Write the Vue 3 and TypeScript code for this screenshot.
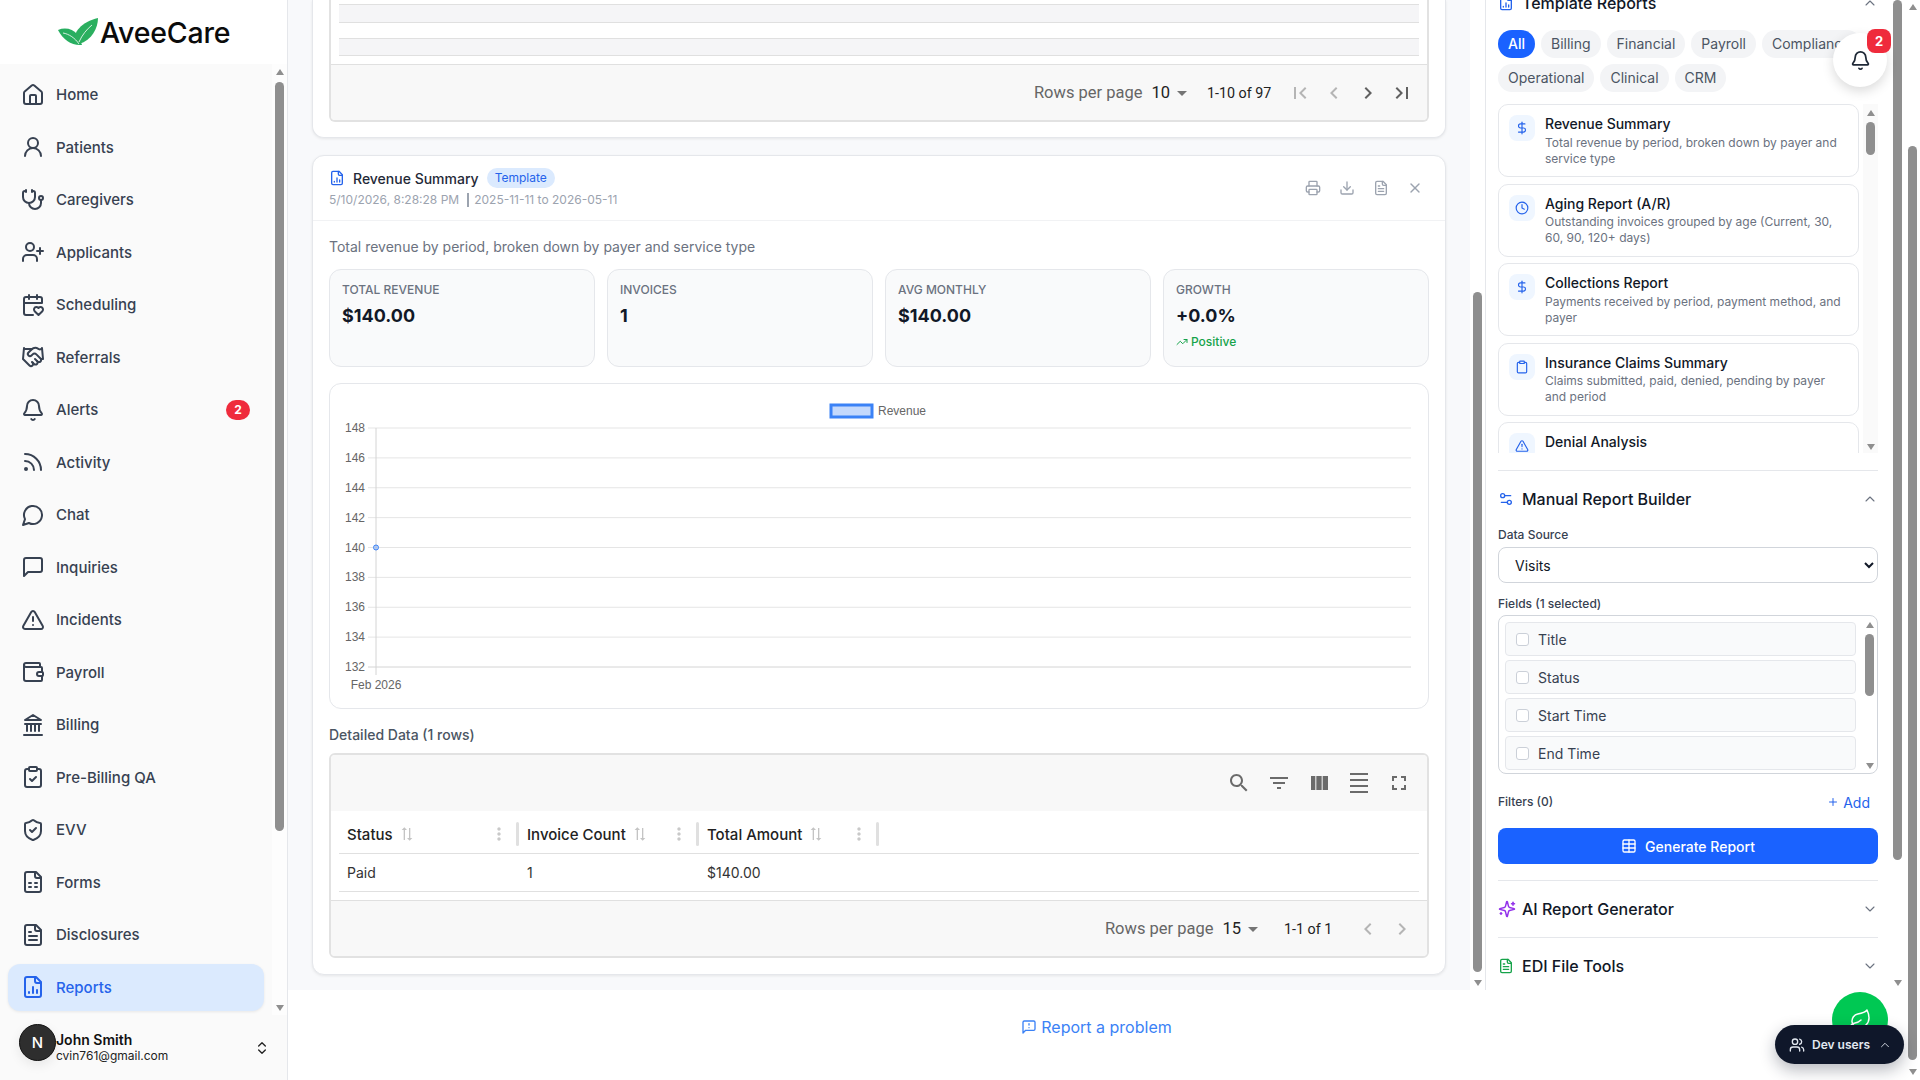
<script setup lang="ts">
const p = (...d: string[]) => d.map((x) => `<path d="${x}"/>`).join("");
const fileBase = "M15 2H6a2 2 0 0 0-2 2v16a2 2 0 0 0 2 2h12a2 2 0 0 0 2-2V7Z";
const fileFold = "M14 2v4a2 2 0 0 0 2 2h4";
const clip =
  '<rect x="8" y="2" width="8" height="4" rx="1"/>' +
  p("M16 4h2a2 2 0 0 1 2 2v14a2 2 0 0 1-2 2H6a2 2 0 0 1-2-2V6a2 2 0 0 1 2-2h2");

const ic: Record<string, string> = {
  home: p("M15 21v-8a1 1 0 0 0-1-1h-4a1 1 0 0 0-1 1v8", "M3 10a2 2 0 0 1 .709-1.528l7-5.999a2 2 0 0 1 2.582 0l7 5.999A2 2 0 0 1 21 10v9a2 2 0 0 1-2 2H5a2 2 0 0 1-2-2z"),
  user: '<circle cx="12" cy="8" r="5"/>' + p("M20 21a8 8 0 0 0-16 0"),
  steth: p("M11 2v2", "M5 2v2", "M5 3H4a2 2 0 0 0-2 2v4a6 6 0 0 0 12 0V5a2 2 0 0 0-2-2h-1", "M8 15a6 6 0 0 0 12 0v-3") + '<circle cx="20" cy="10" r="2"/>',
  userPlus: p("M16 21v-2a4 4 0 0 0-4-4H6a4 4 0 0 0-4 4v2", "M19 8v6", "M22 11h-6") + '<circle cx="9" cy="7" r="4"/>',
  calHeart: p("M3 10h18V6a2 2 0 0 0-2-2H5a2 2 0 0 0-2 2v14c0 1.1.9 2 2 2h7", "M8 2v4", "M16 2v4", "M21.29 14.7a2.43 2.43 0 0 0-2.65-.52c-.3.12-.57.3-.8.53l-.34.34-.35-.34a2.43 2.43 0 0 0-2.65-.53c-.3.12-.56.3-.79.53-.95.94-1 2.53.2 3.74L17.5 22l3.6-3.55c1.2-1.21 1.14-2.8.19-3.74Z"),
  handshake: p("m11 17 2 2a1 1 0 1 0 3-3", "m14 14 2.5 2.5a1 1 0 1 0 3-3l-3.88-3.88a3 3 0 0 0-4.24 0l-.88.88a1 1 0 1 1-3-3l2.81-2.81a5.79 5.79 0 0 1 7.06-.87l.47.28a2 2 0 0 0 1.42.25L21 4", "m21 3 1 11h-2", "M3 3 2 14l6.5 6.5a1 1 0 1 0 3-3", "M3 4h8"),
  bell: p("M10.268 21a2 2 0 0 0 3.464 0", "M3.262 15.326A1 1 0 0 0 4 17h16a1 1 0 0 0 .74-1.673C19.41 13.956 18 12.499 18 8A6 6 0 0 0 6 8c0 4.499-1.411 5.956-2.738 7.326"),
  rss: p("M4 11a9 9 0 0 1 9 9", "M4 4a16 16 0 0 1 16 16") + '<circle cx="5" cy="19" r="1"/>',
  chat: p("M7.9 20A9 9 0 1 0 4 16.1L2 22Z"),
  square: p("M21 15a2 2 0 0 1-2 2H7l-4 4V5a2 2 0 0 1 2-2h14a2 2 0 0 1 2 2z"),
  alert: p("m21.73 18-8-14a2 2 0 0 0-3.48 0l-8 14A2 2 0 0 0 4 21h16a2 2 0 0 0 1.73-3", "M12 9v4", "M12 17h.01"),
  wallet: p("M19 7V4a1 1 0 0 0-1-1H5a2 2 0 0 0 0 4h15a1 1 0 0 1 1 1v4h-3a2 2 0 0 0 0 4h3a1 1 0 0 0 1-1v-2a1 1 0 0 0-1-1", "M3 5v14a2 2 0 0 0 2 2h15a1 1 0 0 0 1-1v-4"),
  bank: p("M3 22h18", "M6 18v-7", "M10 18v-7", "M14 18v-7", "M18 18v-7", "M12 2l8 5H4z", "M4 11h16"),
  clipCheck: clip + p("m9 14 2 2 4-4"),
  shield: p("M20 13c0 5-3.5 7.5-7.66 8.95a1 1 0 0 1-.67-.01C7.5 20.5 4 18 4 13V6a1 1 0 0 1 1-1c2 0 4.5-1.2 6.24-2.72a1.17 1.17 0 0 1 1.52 0C14.51 3.81 17 5 19 5a1 1 0 0 1 1 1z", "m9 12 2 2 4-4"),
  forms: p(fileBase, fileFold, "M8 13h2", "M14 13h2", "M8 17h2", "M14 17h2"),
  fileText: p(fileBase, fileFold, "M10 9H8", "M16 13H8", "M16 17H8"),
  fileChart: p(fileBase, fileFold, "M8 18v-1", "M12 18v-6", "M16 18v-3"),
  dollar: p("M12 2v20", "M17 5H9.5a3.5 3.5 0 0 0 0 7h5a3.5 3.5 0 0 1 0 7H6"),
  clock: '<circle cx="12" cy="12" r="10"/>' + p("M12 6v6l4 2"),
  clip,
  sliders: p("M14 17H5", "M19 7h-9") + '<circle cx="17" cy="17" r="3"/><circle cx="7" cy="7" r="3"/>',
  sparkles: p("M9.937 15.5A2 2 0 0 0 8.5 14.063l-6.135-1.582a.5.5 0 0 1 0-.962L8.5 9.936A2 2 0 0 0 9.937 8.5l1.582-6.135a.5.5 0 0 1 .963 0L14.063 8.5A2 2 0 0 0 15.5 9.937l6.135 1.581a.5.5 0 0 1 0 .964L15.5 14.063a2 2 0 0 0-1.437 1.437l-1.582 6.135a.5.5 0 0 1-.963 0z", "M20 3v4", "M22 5h-4", "M4 17v2", "M5 18H3"),
  table: '<rect x="3" y="3" width="18" height="18" rx="2"/>' + p("M12 3v18", "M3 9h18", "M3 15h18"),
  printer: p("M6 18H4a2 2 0 0 1-2-2v-5a2 2 0 0 1 2-2h16a2 2 0 0 1 2 2v5a2 2 0 0 1-2 2h-2", "M6 9V3a1 1 0 0 1 1-1h10a1 1 0 0 1 1 1v6") + '<rect x="6" y="14" width="12" height="8" rx="1"/>',
  download: p("M12 15V3", "M21 15v4a2 2 0 0 1-2 2H5a2 2 0 0 1-2-2v-4", "m7 10 5 5 5-5"),
  close: p("M18 6 6 18", "m6 6 12 12"),
  updown: p("m7 15 5 5 5-5", "m7 9 5-5 5 5"),
  up: p("m18 15-6-6-6 6"),
  down: p("m6 9 6 6 6-6"),
  report: p("M21 15a2 2 0 0 1-2 2H7l-4 4V5a2 2 0 0 1 2-2h14a2 2 0 0 1 2 2z", "M12 7v2", "M12 13h.01"),
  plus: p("M5 12h14", "M12 5v14"),
  trend: p("M16 7h6v6", "m22 7-8.5 8.5-5-5L2 17"),
  leaf: p("M11 20A7 7 0 0 1 9.8 6.1C15.5 5 17 4.48 19 2c1 2 2 4.18 2 8 0 5.5-4.78 10-10 10Z", "M2 21c0-3 1.85-5.36 5.08-6C9.5 14.52 12 13 13 12"),
  users: p("M16 21v-2a4 4 0 0 0-4-4H6a4 4 0 0 0-4 4v2", "M22 21v-2a4 4 0 0 0-3-3.87", "M16 3.13a4 4 0 0 1 0 7.75") + '<circle cx="9" cy="7" r="4"/>',
};

// material icons used by the data table
const mi: Record<string, string> = {
  search: p("M15.5 14h-.79l-.28-.27C15.41 12.59 16 11.11 16 9.5 16 5.91 13.09 3 9.5 3S3 5.91 3 9.5 5.91 16 9.5 16c1.61 0 3.09-.59 4.23-1.57l.27.28v.79l5 4.99L20.49 19l-4.99-5zm-6 0C7.01 14 5 11.99 5 9.5S7.01 5 9.5 5 14 7.01 14 9.5 11.99 14 9.5 14z"),
  filter: p("M10 18h4v-2h-4v2zM3 6v2h18V6H3zm3 7h12v-2H6v2z"),
  columns: p("M14.67 5v14H9.33V5h5.34zm1 14H21V5h-5.33v14zm-7.34 0V5H4v14h4.33z"),
  density: p("M3 2h18v2H3zm0 18h18v2H3zm0-6h18v2H3zm0-6h18v2H3z"),
  full: p("M7 14H5v5h5v-2H7v-3zm-2-4h2V7h3V5H5v5zm12 7h-3v2h5v-5h-2v3zM14 5v2h3v3h2V5h-5z"),
  first: p("M18.41 16.59 13.82 12l4.59-4.59L17 6l-6 6 6 6zM6 6h2v12H6z"),
  last: p("M5.59 7.41 10.18 12l-4.59 4.59L7 18l6-6-6-6zM16 6h2v12h-2z"),
  prev: p("M15.41 7.41 14 6l-6 6 6 6 1.41-1.41L10.83 12z"),
  next: p("M10 6 8.59 7.41 13.17 12l-4.58 4.59L10 18l6-6z"),
  more: p("M12 8c1.1 0 2-.9 2-2s-.9-2-2-2-2 .9-2 2 .9 2 2 2zm0 2c-1.1 0-2 .9-2 2s.9 2 2 2 2-.9 2-2-.9-2-2-2zm0 6c-1.1 0-2 .9-2 2s.9 2 2 2 2-.9 2-2-.9-2-2-2z"),
  sort: p("m18 12 4-4-4-4v3H3v2h15zM6 12l-4 4 4 4v-3h15v-2H6z"),
  caret: p("m7 10 5 5 5-5z"),
};

const navItems = [
  { label: "Home", icon: "home" },
  { label: "Patients", icon: "user" },
  { label: "Caregivers", icon: "steth" },
  { label: "Applicants", icon: "userPlus" },
  { label: "Scheduling", icon: "calHeart" },
  { label: "Referrals", icon: "handshake" },
  { label: "Alerts", icon: "bell", badge: 2 },
  { label: "Activity", icon: "rss" },
  { label: "Chat", icon: "chat" },
  { label: "Inquiries", icon: "square" },
  { label: "Incidents", icon: "alert" },
  { label: "Payroll", icon: "wallet" },
  { label: "Billing", icon: "bank" },
  { label: "Pre-Billing QA", icon: "clipCheck" },
  { label: "EVV", icon: "shield" },
  { label: "Forms", icon: "forms" },
  { label: "Disclosures", icon: "fileText" },
  { label: "Reports", icon: "fileChart", active: true },
];

const kpis = [
  { label: "Total Revenue", value: "$140.00" },
  { label: "Invoices", value: "1" },
  { label: "Avg Monthly", value: "$140.00" },
  { label: "Growth", value: "+0.0%", positive: true },
];

const yTicks = [148, 146, 144, 142, 140, 138, 136, 134, 132];
const tickY = (i: number) => 44 + i * 29.875;

const columns = ["Status", "Invoice Count", "Total Amount"];
const cells = ["Paid", "1", "$140.00"];

const chips = ["All", "Billing", "Financial", "Payroll", "Compliance", "Operational", "Clinical", "CRM"];

const templates = [
  { title: "Revenue Summary", desc: "Total revenue by period, broken down by payer and service type", icon: "dollar" },
  { title: "Aging Report (A/R)", desc: "Outstanding invoices grouped by age (Current, 30, 60, 90, 120+ days)", icon: "clock" },
  { title: "Collections Report", desc: "Payments received by period, payment method, and payer", icon: "dollar" },
  { title: "Insurance Claims Summary", desc: "Claims submitted, paid, denied, pending by payer and period", icon: "clip" },
  { title: "Denial Analysis", desc: "", icon: "alert" },
];

const fields = ["Title", "Status", "Start Time", "End Time"];
</script>

<template>
  <div class="app">
    <aside class="sidebar">
      <div class="logo">
        <svg class="logo-mark" viewBox="0 0 42 28">
          <path d="M1 12c7-3 15-1 19 4 2 3 4 8 5 11C15 28 6 22 1 12z" fill="#27ae60" />
          <path d="M18 25C15 14 25 4 41 0c0 10-6 22-19 26z" fill="#2baf5f" />
          <path d="M6 15c6 1 12 5 16 11M22 24c3-7 8-13 13-17" fill="none" stroke="#fff" stroke-width=".8" />
        </svg>
        <span class="logo-text">AveeCare</span>
      </div>
      <div class="nav-wrap">
        <nav class="nav">
          <a v-for="item in navItems" :key="item.label" class="nav-item" :class="{ active: item.active }">
            <svg class="ic nav-ic" viewBox="0 0 24 24" v-html="ic[item.icon]" />
            <span>{{ item.label }}</span>
            <b v-if="item.badge" class="nav-badge">{{ item.badge }}</b>
          </a>
        </nav>
        <div class="rail rail-nav"><i class="arrow up" /><i class="thumb" /><i class="arrow dn" /></div>
      </div>
      <div class="user">
        <div class="avatar">N</div>
        <div class="user-text">
          <div class="user-name">John Smith</div>
          <div class="user-mail">cvin761@gmail.com</div>
        </div>
        <svg class="ic user-toggle" viewBox="0 0 24 24" v-html="ic.updown" />
      </div>
    </aside>

    <div class="page">
      <div class="page-body">
        <main class="main">
          <div class="main-scroll">
            <section class="card card-cut">
              <div class="dt dt-cut">
                <div class="dt-rows">
                  <div class="cut-row stripe short" />
                  <div class="cut-row" />
                  <div class="cut-row stripe" />
                </div>
                <div class="dt-foot">
                  <span class="rpp">Rows per page</span>
                  <span class="rpp-val">10</span>
                  <svg class="mi caret" viewBox="0 0 24 24" v-html="mi.caret" />
                  <span class="range">1-10 of 97</span>
                  <svg class="mi pg dim" viewBox="0 0 24 24" v-html="mi.first" />
                  <svg class="mi pg dim" viewBox="0 0 24 24" v-html="mi.prev" />
                  <svg class="mi pg" viewBox="0 0 24 24" v-html="mi.next" />
                  <svg class="mi pg" viewBox="0 0 24 24" v-html="mi.last" />
                </div>
              </div>
            </section>

            <section class="card card-report">
              <header class="report-head">
                <div>
                  <div class="report-title">
                    <svg class="ic title-ic" viewBox="0 0 24 24" v-html="ic.fileChart" />
                    <span>Revenue Summary</span>
                    <span class="tag">Template</span>
                  </div>
                  <div class="report-meta">
                    <span>5/10/2026, 8:28:28 PM</span>
                    <i class="meta-sep" />
                    <span>2025-11-11 to 2026-05-11</span>
                  </div>
                </div>
                <div class="report-actions">
                  <svg class="ic" viewBox="0 0 24 24" v-html="ic.printer" />
                  <svg class="ic" viewBox="0 0 24 24" v-html="ic.download" />
                  <svg class="ic" viewBox="0 0 24 24" v-html="ic.fileText" />
                  <svg class="ic" viewBox="0 0 24 24" v-html="ic.close" />
                </div>
              </header>

              <div class="report-body">
                <p class="report-desc">Total revenue by period, broken down by payer and service type</p>
                <div class="kpis">
                  <div v-for="k in kpis" :key="k.label" class="kpi">
                    <div class="kpi-label">{{ k.label }}</div>
                    <div class="kpi-value">{{ k.value }}</div>
                    <div v-if="k.positive" class="kpi-note">
                      <svg class="ic" viewBox="0 0 24 24" v-html="ic.trend" />
                      <span>Positive</span>
                    </div>
                  </div>
                </div>

                <div class="chart-card">
                  <svg class="chart" viewBox="0 0 1098 324">
                    <rect x="501" y="21" width="41" height="12" fill="rgba(59,130,246,.3)" stroke="#3b82f6" stroke-width="3" />
                    <text x="548" y="31" class="chart-text">Revenue</text>
                    <g v-for="(t, i) in yTicks" :key="t">
                      <line x1="38" x2="1081" :y1="tickY(i)" :y2="tickY(i)" :stroke="i === 8 ? '#d4d4d4' : '#e5e5e5'" />
                      <text x="35" :y="tickY(i) + 4" text-anchor="end" class="chart-text">{{ t }}</text>
                    </g>
                    <line x1="46" x2="46" y1="44" y2="291" stroke="#d4d4d4" />
                    <text x="46" y="305" text-anchor="middle" class="chart-text">Feb 2026</text>
                    <circle cx="46" cy="163.5" r="2.5" fill="rgba(59,130,246,.3)" stroke="#3b82f6" />
                  </svg>
                </div>

                <div class="detail-label">Detailed Data (1 rows)</div>
                <div class="dt">
                  <div class="dt-tools">
                    <svg class="mi" viewBox="0 0 24 24" v-html="mi.search" />
                    <svg class="mi" viewBox="0 0 24 24" v-html="mi.filter" />
                    <svg class="mi" viewBox="0 0 24 24" v-html="mi.columns" />
                    <svg class="mi" viewBox="0 0 24 24" v-html="mi.density" />
                    <svg class="mi" viewBox="0 0 24 24" v-html="mi.full" />
                  </div>
                  <div class="dt-rows">
                    <div class="dt-head">
                      <div v-for="c in columns" :key="c" class="th">
                        <span>{{ c }}</span>
                        <svg class="mi sort" viewBox="0 0 24 24" v-html="mi.sort" />
                        <svg class="mi more" viewBox="0 0 24 24" v-html="mi.more" />
                        <i class="th-sep" />
                      </div>
                    </div>
                    <div class="dt-row">
                      <div v-for="c in cells" :key="c" class="td">{{ c }}</div>
                    </div>
                  </div>
                  <div class="dt-foot">
                    <span class="rpp">Rows per page</span>
                    <span class="rpp-val">15</span>
                    <svg class="mi caret" viewBox="0 0 24 24" v-html="mi.caret" />
                    <span class="range wide">1-1 of 1</span>
                    <svg class="mi pg dim" viewBox="0 0 24 24" v-html="mi.prev" />
                    <svg class="mi pg dim" viewBox="0 0 24 24" v-html="mi.next" />
                  </div>
                </div>
              </div>
            </section>
          </div>
          <div class="rail rail-main"><i class="thumb" /><i class="arrow dn" /></div>
        </main>

        <div class="panel">
          <div class="panel-scroll">
            <div class="sec-head cut-head">
              <svg class="ic sec-ic blue" viewBox="0 0 24 24" v-html="ic.fileChart" />
              <span>Template Reports</span>
              <svg class="ic sec-chev" viewBox="0 0 24 24" v-html="ic.up" />
            </div>
            <div class="chips">
              <span v-for="(c, i) in chips" :key="c" class="chip" :class="{ on: i === 0 }">{{ c }}</span>
            </div>
            <div class="tpl-wrap">
              <div class="tpl-list">
                <div v-for="t in templates" :key="t.title" class="tpl">
                  <div class="tpl-ic"><svg class="ic" viewBox="0 0 24 24" v-html="ic[t.icon]" /></div>
                  <div>
                    <div class="tpl-title">{{ t.title }}</div>
                    <div v-if="t.desc" class="tpl-desc">{{ t.desc }}</div>
                  </div>
                </div>
              </div>
              <div class="rail rail-tpl"><i class="arrow up" /><i class="thumb" /><i class="arrow dn" /></div>
            </div>

            <div class="sec builder">
              <div class="sec-head">
                <svg class="ic sec-ic blue" viewBox="0 0 24 24" v-html="ic.sliders" />
                <span>Manual Report Builder</span>
                <svg class="ic sec-chev" viewBox="0 0 24 24" v-html="ic.up" />
              </div>
              <label class="lbl">Data Source</label>
              <select class="source"><option>Visits</option></select>
              <label class="lbl lbl-fields">Fields (1 selected)</label>
              <div class="fields">
                <div class="field-list">
                  <div v-for="f in fields" :key="f" class="field">
                    <i class="check" />
                    <span>{{ f }}</span>
                  </div>
                </div>
                <div class="rail rail-fields"><i class="arrow up" /><i class="thumb" /><i class="arrow dn" /></div>
              </div>
              <div class="filters">
                <label class="lbl">Filters (0)</label>
                <span class="add"><svg class="ic" viewBox="0 0 24 24" v-html="ic.plus" />Add</span>
              </div>
              <button class="generate">
                <svg class="ic" viewBox="0 0 24 24" v-html="ic.table" />
                Generate Report
              </button>
            </div>

            <div class="sec">
              <div class="sec-head">
                <svg class="ic sec-ic spark purple" viewBox="0 0 24 24" v-html="ic.sparkles" />
                <span>AI Report Generator</span>
                <svg class="ic sec-chev" viewBox="0 0 24 24" v-html="ic.down" />
              </div>
            </div>
            <div class="sec">
              <div class="sec-head">
                <svg class="ic sec-ic green" viewBox="0 0 24 24" v-html="ic.fileText" />
                <span>EDI File Tools</span>
                <svg class="ic sec-chev" viewBox="0 0 24 24" v-html="ic.down" />
              </div>
            </div>
          </div>
          <div class="rail rail-panel"><i class="thumb" /><i class="arrow dn" /></div>
        </div>
      </div>

      <footer class="footer">
        <a class="report-link">
          <svg class="ic" viewBox="0 0 24 24" v-html="ic.report" />
          Report a problem
        </a>
      </footer>
    </div>

    <div class="rail rail-page"><i class="arrow up" /><i class="thumb" /><i class="arrow dn" /></div>

    <div class="bell-fab">
      <svg class="ic" viewBox="0 0 24 24" v-html="ic.bell" />
      <b class="bell-badge">2</b>
    </div>
    <div class="leaf-fab"><svg class="ic" viewBox="0 0 24 24" v-html="ic.leaf" /></div>
    <div class="dev-pill">
      <svg class="ic" viewBox="0 0 24 24" v-html="ic.users" />
      <span>Dev users</span>
      <svg class="ic pill-chev" viewBox="0 0 24 24" v-html="ic.up" />
    </div>
  </div>
</template>

<style scoped>
.app {
  position: relative;
  display: flex;
  width: 1920px;
  height: 1080px;
  overflow: hidden;
  background: #fff;
  font-family: Inter, "Liberation Sans", sans-serif;
  color: #111827;
}
.ic {
  width: 16px;
  height: 16px;
  flex: none;
  fill: none;
  stroke: currentColor;
  stroke-width: 2;
  stroke-linecap: round;
  stroke-linejoin: round;
}
.mi {
  width: 24px;
  height: 24px;
  flex: none;
  fill: currentColor;
}

/* scrollbars */
.rail {
  display: flex;
  flex: none;
  flex-direction: column;
  align-items: center;
  width: 15px;
}
.thumb {
  display: block;
  width: 9px;
  border-radius: 5px;
  background: #8f8f8f;
}
.arrow {
  display: block;
  width: 0;
  height: 0;
  border-left: 4.5px solid transparent;
  border-right: 4.5px solid transparent;
}
.arrow.up {
  border-bottom: 6px solid #8f8f8f;
}
.arrow.dn {
  margin-top: auto;
  border-top: 6px solid #8f8f8f;
}
.rail-nav {
  padding: 5px 0 4px;
  background: #fdfdfd;
}
.rail-nav .thumb {
  margin-top: 7px;
  height: 749px;
}
.rail-main {
  padding-bottom: 4px;
  background: #fff;
}
.rail-main .thumb {
  margin-top: 292px;
  height: 680px;
}
.rail-panel {
  padding-bottom: 4px;
  background: #fff;
}
.rail-panel .thumb {
  height: 860px;
}
.rail-page {
  padding: 4px 0 5px;
}
.rail-page .thumb {
  margin-top: 136px;
  height: 914px;
}
.rail-tpl {
  margin-left: 4px;
  padding: 6px 0 3px;
  background: #fafafa;
}
.rail-tpl .thumb {
  margin-top: 6px;
  height: 33px;
}
.rail-fields {
  margin: -6px 0 -6px 6px;
  padding: 6px 0 4px;
}
.rail-fields .thumb {
  margin-top: 6px;
  height: 62px;
}

/* sidebar */
.sidebar {
  display: flex;
  flex: none;
  flex-direction: column;
  width: 288px;
  border-right: 1px solid #e5e7eb;
  box-sizing: border-box;
}
.logo {
  display: flex;
  flex: none;
  align-items: center;
  height: 64px;
  padding: 0 0 0 57px;
  box-sizing: border-box;
}
.logo-mark {
  width: 42px;
  height: 28px;
  margin-right: 1px;
}
.logo-text {
  font-size: 28.5px;
  font-weight: 500;
  color: #0b0b0b;
  letter-spacing: -0.2px;
}
.nav-wrap {
  display: flex;
  flex: none;
  height: 951px;
}
.nav {
  flex: 1;
  padding: 7.5px 8px 0;
  background: #fafafa;
}
.nav-item {
  display: flex;
  align-items: center;
  gap: 11px;
  height: 46.5px;
  margin-bottom: 6px;
  padding: 0 14px 0 13px;
  border-radius: 12px;
  font-size: 15px;
  font-weight: 500;
  color: #374151;
}
.nav-ic {
  width: 24px;
  height: 24px;
}
.nav-item.active {
  background: #dbeafe;
  color: #2563eb;
  box-shadow: 0 1px 3px rgba(0, 0, 0, 0.08);
}
.nav-badge {
  margin-left: auto;
  width: 24px;
  height: 20px;
  border-radius: 10px;
  background: #ef2b3c;
  color: #fff;
  font-size: 12px;
  line-height: 20px;
  text-align: center;
}
.user {
  position: relative;
  display: flex;
  flex: 1;
  align-items: center;
  padding-left: 19px;
  background: #fafafa;
}
.avatar {
  display: flex;
  flex: none;
  align-items: center;
  justify-content: center;
  width: 37px;
  height: 37px;
  margin-bottom: 11px;
  border-radius: 50%;
  box-sizing: border-box;
  border: 1px solid #111;
  background: #2e2e2e;
  color: #fff;
  font-size: 15px;
  font-weight: 500;
  box-shadow: 0 4px 12px rgba(0, 0, 0, 0.08);
}
.user-text {
  position: relative;
}
.user-name {
  font-size: 14px;
  font-weight: 600;
  line-height: 17px;
  color: #111;
}
.user-mail {
  font-size: 12px;
  line-height: 16px;
  color: #222;
}
.user-toggle {
  margin-left: auto;
  margin-right: 17px;
  color: #222;
}

/* page */
.page {
  display: flex;
  flex: 1;
  flex-direction: column;
  min-width: 0;
}
.page-body {
  display: flex;
  flex: none;
  height: 990px;
}
.main {
  display: flex;
  flex: none;
  width: 1197px;
  background: #f8f9fb;
}
.main-scroll {
  flex: 1;
  min-width: 0;
  padding: 0 24px;
}
.card {
  border: 1px solid #e5e7eb;
  border-radius: 12px;
  background: #fff;
  box-shadow: 0 1px 3px rgba(0, 0, 0, 0.08);
}
.card-cut {
  padding: 0 16px 15px;
  border-top: 0;
  border-radius: 0 0 12px 12px;
}
.card-report {
  margin-top: 17px;
}
.dt {
  border: 2px solid #e2e2e2;
  border-radius: 6px;
  overflow: hidden;
  background: #fff;
}
.dt-cut {
  border-top: 0;
  border-radius: 0 0 6px 6px;
}
.dt-rows {
  padding: 0 8px 8px;
}
.cut-row {
  height: 15px;
  border-bottom: 1px solid #e0e0e0;
}
.cut-row.stripe {
  height: 16px;
  background: #f5f5f7;
}
.cut-row.short {
  height: 17px;
  margin-top: 4px;
  border-top: 1px solid #e0e0e0;
}
.dt-foot {
  display: flex;
  align-items: center;
  justify-content: flex-end;
  height: 56px;
  padding-right: 8px;
  box-sizing: border-box;
  border-top: 1px solid #e0e0e0;
  background: #f8f8f8;
  font-family: Roboto, "Liberation Sans", sans-serif;
  font-size: 16.5px;
}
.rpp {
  color: #666;
}
.rpp-val {
  margin-left: 9px;
  color: #222;
}
.caret {
  color: #757575;
}
.range {
  width: 68px;
  margin: 0 8px 0 13px;
  font-size: 14.3px;
  white-space: nowrap;
  color: #222;
}
.range.wide {
  width: 59px;
  margin-left: 19px;
}
.pg {
  margin: 0 5px;
  color: #616161;
}
.pg.dim {
  color: #b5b5b5;
}

.report-head {
  display: flex;
  align-items: center;
  justify-content: space-between;
  padding: 12px 14px 12px 16px;
  border-bottom: 1px solid #f1f2f4;
}
.report-title {
  display: flex;
  align-items: center;
  height: 20px;
  font-size: 14px;
  font-weight: 500;
  color: #1f2937;
}
.title-ic {
  margin-right: 8px;
  color: #2563eb;
}
.tag {
  margin-left: 8px;
  padding: 0 8px;
  border-radius: 10px;
  background: #dbeafe;
  color: #2563eb;
  font-size: 12px;
  font-weight: 400;
  line-height: 20px;
}
.report-meta {
  display: flex;
  align-items: center;
  margin-top: 4px;
  font-size: 12px;
  line-height: 16px;
  color: #9ca3af;
}
.meta-sep {
  width: 2px;
  height: 14px;
  margin: 0 5px 0 8px;
  background: #9ca3af;
}
.report-actions {
  display: flex;
  gap: 18px;
  padding-right: 8px;
  color: #9ca3af;
}
.report-body {
  padding: 16px;
}
.report-desc {
  margin: 0 0 12px;
  font-size: 14px;
  line-height: 20px;
  color: #6b7280;
}
.kpis {
  display: grid;
  grid-template-columns: repeat(4, 1fr);
  gap: 12px;
}
.kpi {
  height: 98px;
  padding: 12px;
  box-sizing: border-box;
  border: 1px solid #e5e7eb;
  border-radius: 12px;
  background: #f9fafb;
}
.kpi-label {
  font-size: 12px;
  font-weight: 500;
  line-height: 16px;
  color: #6b7280;
  text-transform: uppercase;
}
.kpi-value {
  margin-top: 4px;
  font-size: 18px;
  font-weight: 700;
  line-height: 28px;
  color: #111827;
}
.kpi-note {
  display: flex;
  align-items: center;
  gap: 3px;
  margin-top: 4px;
  font-size: 12px;
  font-weight: 500;
  line-height: 16px;
  color: #16a34a;
}
.kpi-note .ic {
  width: 12px;
  height: 12px;
}
.chart-card {
  margin-top: 16px;
  height: 326px;
  box-sizing: border-box;
  border: 1px solid #e5e7eb;
  border-radius: 12px;
}
.chart {
  display: block;
  width: 1098px;
  height: 324px;
}
.chart-text {
  font-family: "Liberation Sans", sans-serif;
  font-size: 12px;
  fill: #666;
}
.detail-label {
  margin: 16px 0 8px;
  font-size: 14px;
  font-weight: 500;
  line-height: 20px;
  color: #4b5563;
}
.dt-tools {
  display: flex;
  align-items: center;
  justify-content: flex-end;
  gap: 16px;
  height: 56px;
  padding-right: 16px;
  background: #f8f8f8;
  color: #6b6b6b;
}
.dt-head,
.dt-row {
  display: flex;
  border-bottom: 1px solid #e0e0e0;
}
.dt-head {
  height: 38px;
  padding-top: 4px;
}
.dt-row {
  height: 37px;
}
.th,
.td {
  display: flex;
  align-items: center;
  flex: none;
  width: 180px;
  padding-left: 8px;
  box-sizing: border-box;
  font-size: 14px;
  color: #333;
}
.th {
  font-size: 15px;
  font-weight: 500;
  color: #222;
}
.sort {
  width: 16px;
  height: 16px;
  margin-left: 6px;
  transform: rotate(90deg);
  color: #c4c4c4;
}
.more {
  width: 20px;
  height: 20px;
  margin-left: auto;
  color: #c9c9c9;
}
.th-sep {
  width: 3px;
  height: 24px;
  margin-left: 7px;
  border-radius: 2px;
  background: #e0e0e0;
}

/* right panel */
.panel {
  display: flex;
  flex: 1;
  min-width: 0;
  border-left: 1px solid #e5e7eb;
  background: #fff;
}
.panel-scroll {
  flex: 1;
  min-width: 0;
  padding: 0 12px;
}
.sec-head {
  display: flex;
  align-items: center;
  height: 56px;
  font-size: 16px;
  font-weight: 500;
  color: #111827;
}
.sec-ic {
  margin-right: 8px;
}
.sec-ic.spark {
  width: 18px;
  height: 18px;
  margin-right: 6px;
}
.blue {
  color: #2563eb;
}
.purple {
  color: #9333ea;
}
.green {
  color: #16a34a;
}
.sec-chev {
  margin-left: auto;
  margin-right: 0;
  color: #6b7280;
  stroke-width: 1.6;
}
.cut-head {
  height: 24px;
  margin-top: -9px;
}
.chips {
  display: flex;
  flex-wrap: wrap;
  gap: 6px;
  margin-top: 15px;
}
.chip {
  height: 28px;
  padding: 0 10px;
  border-radius: 14px;
  background: #f3f4f6;
  color: #4b5563;
  font-size: 14px;
  line-height: 28px;
}
.chip.on {
  background: #1a62ff;
  color: #fff;
  font-weight: 500;
}
.tpl-wrap {
  display: flex;
  height: 349px;
  margin-top: 12px;
  overflow: hidden;
}
.tpl-list {
  flex: 1;
  min-width: 0;
}
.tpl {
  display: flex;
  gap: 10px;
  height: 73px;
  margin-bottom: 6.6px;
  padding: 9px 10px;
  box-sizing: border-box;
  border: 1px solid #e5e7eb;
  border-radius: 10px;
}
.tpl-ic {
  display: flex;
  flex: none;
  align-items: center;
  justify-content: center;
  width: 26px;
  height: 26px;
  margin-top: 1px;
  border-radius: 8px;
  background: #eff6ff;
  color: #2563eb;
}
.tpl-ic .ic {
  width: 14px;
  height: 14px;
}
.tpl-title {
  font-size: 14px;
  font-weight: 500;
  line-height: 19px;
  color: #111827;
}
.tpl-desc {
  margin-top: 2px;
  font-size: 12px;
  line-height: 16px;
  color: #6b7280;
}
.tpl:nth-child(even) .tpl-desc {
  margin-top: 1px;
}
.sec {
  border-top: 1px solid #e5e7eb;
}
.builder {
  margin-top: 17px;
  padding-bottom: 16px;
}
.lbl {
  display: block;
  font-size: 12px;
  font-weight: 500;
  line-height: 16px;
  color: #374151;
}
.source {
  display: block;
  width: 100%;
  height: 36px;
  margin-top: 4px;
  padding: 0 12px;
  border: 1px solid #d1d5db;
  border-radius: 8px;
  background: #fff;
  font-family: inherit;
  font-size: 14px;
  color: #111827;
}
.lbl-fields {
  margin-top: 13px;
}
.fields {
  display: flex;
  height: 159px;
  margin-top: 3px;
  padding: 6px 0 6px 6px;
  box-sizing: border-box;
  border: 1px solid #d1d5db;
  border-radius: 8px;
  overflow: hidden;
}
.field-list {
  flex: 1;
  min-width: 0;
}
.field {
  display: flex;
  align-items: center;
  gap: 9px;
  height: 34px;
  margin-bottom: 4px;
  padding-left: 10px;
  box-sizing: border-box;
  border: 1px solid #e5e7eb;
  border-radius: 4px;
  background: #f9fafb;
  font-size: 14px;
  color: #374151;
}
.check {
  display: block;
  width: 13px;
  height: 13px;
  box-sizing: border-box;
  border: 1.5px solid #cbd0d8;
  border-radius: 3px;
  background: #fff;
}
.filters {
  display: flex;
  align-items: center;
  justify-content: space-between;
  margin-top: 20px;
  height: 16px;
}
.add {
  display: flex;
  align-items: center;
  gap: 4px;
  padding-right: 8px;
  font-size: 14px;
  color: #2563eb;
}
.add .ic {
  width: 12px;
  height: 12px;
}
.generate {
  display: flex;
  align-items: center;
  justify-content: center;
  gap: 8px;
  width: 100%;
  height: 36px;
  margin-top: 18px;
  border: 0;
  border-radius: 8px;
  background: #1a62ff;
  color: #fff;
  font-family: inherit;
  font-size: 14px;
  font-weight: 500;
}

.footer {
  display: flex;
  flex: 1;
  align-items: center;
  justify-content: center;
  padding-bottom: 17px;
  background: #fff;
}
.report-link {
  display: flex;
  align-items: center;
  gap: 4px;
  font-size: 16px;
  color: #3b82f6;
}

/* floating widgets */
.bell-fab {
  position: absolute;
  top: 33px;
  left: 1833px;
  display: flex;
  align-items: center;
  justify-content: center;
  width: 54px;
  height: 54px;
  border-radius: 50%;
  background: #fff;
  box-shadow: 0 4px 12px rgba(0, 0, 0, 0.15);
  color: #1f2937;
}
.bell-fab .ic {
  width: 21px;
  height: 21px;
}
.bell-badge {
  position: absolute;
  top: -4px;
  right: -4px;
  width: 24px;
  height: 24px;
  border-radius: 8px;
  background: #ef2b3c;
  color: #fff;
  font-size: 13px;
  line-height: 24px;
  text-align: center;
}
.leaf-fab {
  position: absolute;
  top: 992px;
  left: 1832px;
  display: flex;
  align-items: center;
  justify-content: center;
  width: 56px;
  height: 56px;
  border-radius: 50%;
  background: #00c853;
  color: #fff;
}
.leaf-fab .ic {
  width: 24px;
  height: 24px;
  stroke-width: 1.5;
}
.dev-pill {
  position: absolute;
  top: 1025px;
  left: 1775px;
  display: flex;
  align-items: center;
  width: 129px;
  height: 39px;
  padding-left: 14px;
  box-sizing: border-box;
  border-radius: 20px;
  background: #0f172a;
  color: #e2e8f0;
  font-size: 12px;
  font-weight: 600;
  box-shadow: 0 6px 16px rgba(15, 23, 42, 0.3);
}
.dev-pill span {
  margin-left: 7px;
}
.pill-chev {
  margin-left: 8px;
  width: 14px;
  height: 14px;
  stroke-width: 1.5;
}
</style>

<style>
html,
body {
  margin: 0;
  overflow: hidden;
}
</style>
